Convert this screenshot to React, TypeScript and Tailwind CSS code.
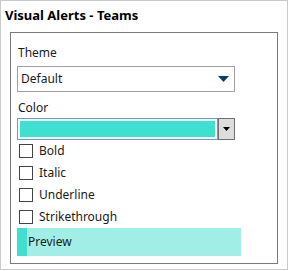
export default function App() {
  const opts = ["Bold", "Italic", "Underline", "Strikethrough"]
  return (
    <div className="w-[289px] h-[271px] bg-white font-['Noto_Sans',sans-serif] text-[12px] text-[#1a1a1a]">
      <div className="w-[288px] h-[270px] border border-[#cacaca] flex flex-col">
        <div className="pl-[4px] pt-[4px] h-[31px] font-bold text-[13px] leading-[20px] text-black">
          Visual Alerts - Teams
        </div>
        <div className="ml-[9px] w-[268px] h-[232px] border border-[#7a7a7a] pl-[6px] pt-[11px] flex flex-col">
          <div className="pl-[1px] leading-[18px]">Theme</div>
          <div className="mt-[4px] w-[218px] h-[26px] border border-[#a0a0a0] flex items-center justify-between pl-[3px] pr-[5px]">
            <span>Default</span>
            <svg width="11" height="6" viewBox="0 0 11 6">
              <path d="M0 0 H11 L5.5 6 Z" fill="#0f3a6a" />
            </svg>
          </div>
          <div className="mt-[7px] pl-[1px] leading-[18px]">Color</div>
          <div className="mt-[1px] w-[218px] h-[22px] flex">
            <div className="flex-1 border border-[#5aa0e6] p-[2px]">
              <div className="w-full h-full bg-[#40e0d0]" />
            </div>
            <div className="w-[17px] h-full border border-[#707070] bg-[#dddddd] flex items-center justify-center">
              <svg width="7" height="4" viewBox="0 0 7 4">
                <path d="M0 0 H7 L3.5 4 Z" fill="#000" />
              </svg>
            </div>
          </div>
          <div className="mt-[4px] flex flex-col gap-[8px] pl-[2px]">
            {opts.map((o) => (
              <div key={o} className="flex items-center h-[14px]">
                <div className="w-[14px] h-[14px] border border-[#444] bg-white" />
                <span className="ml-[6px] leading-[14px]">{o}</span>
              </div>
            ))}
          </div>
          <div className="mt-[4px] w-[224px] h-[28px] bg-[#a0eee6] flex items-center">
            <div className="w-[10px] h-full bg-[#40e0d0]" />
            <span className="ml-[1px]">Preview</span>
          </div>
        </div>
      </div>
    </div>
  )
}
